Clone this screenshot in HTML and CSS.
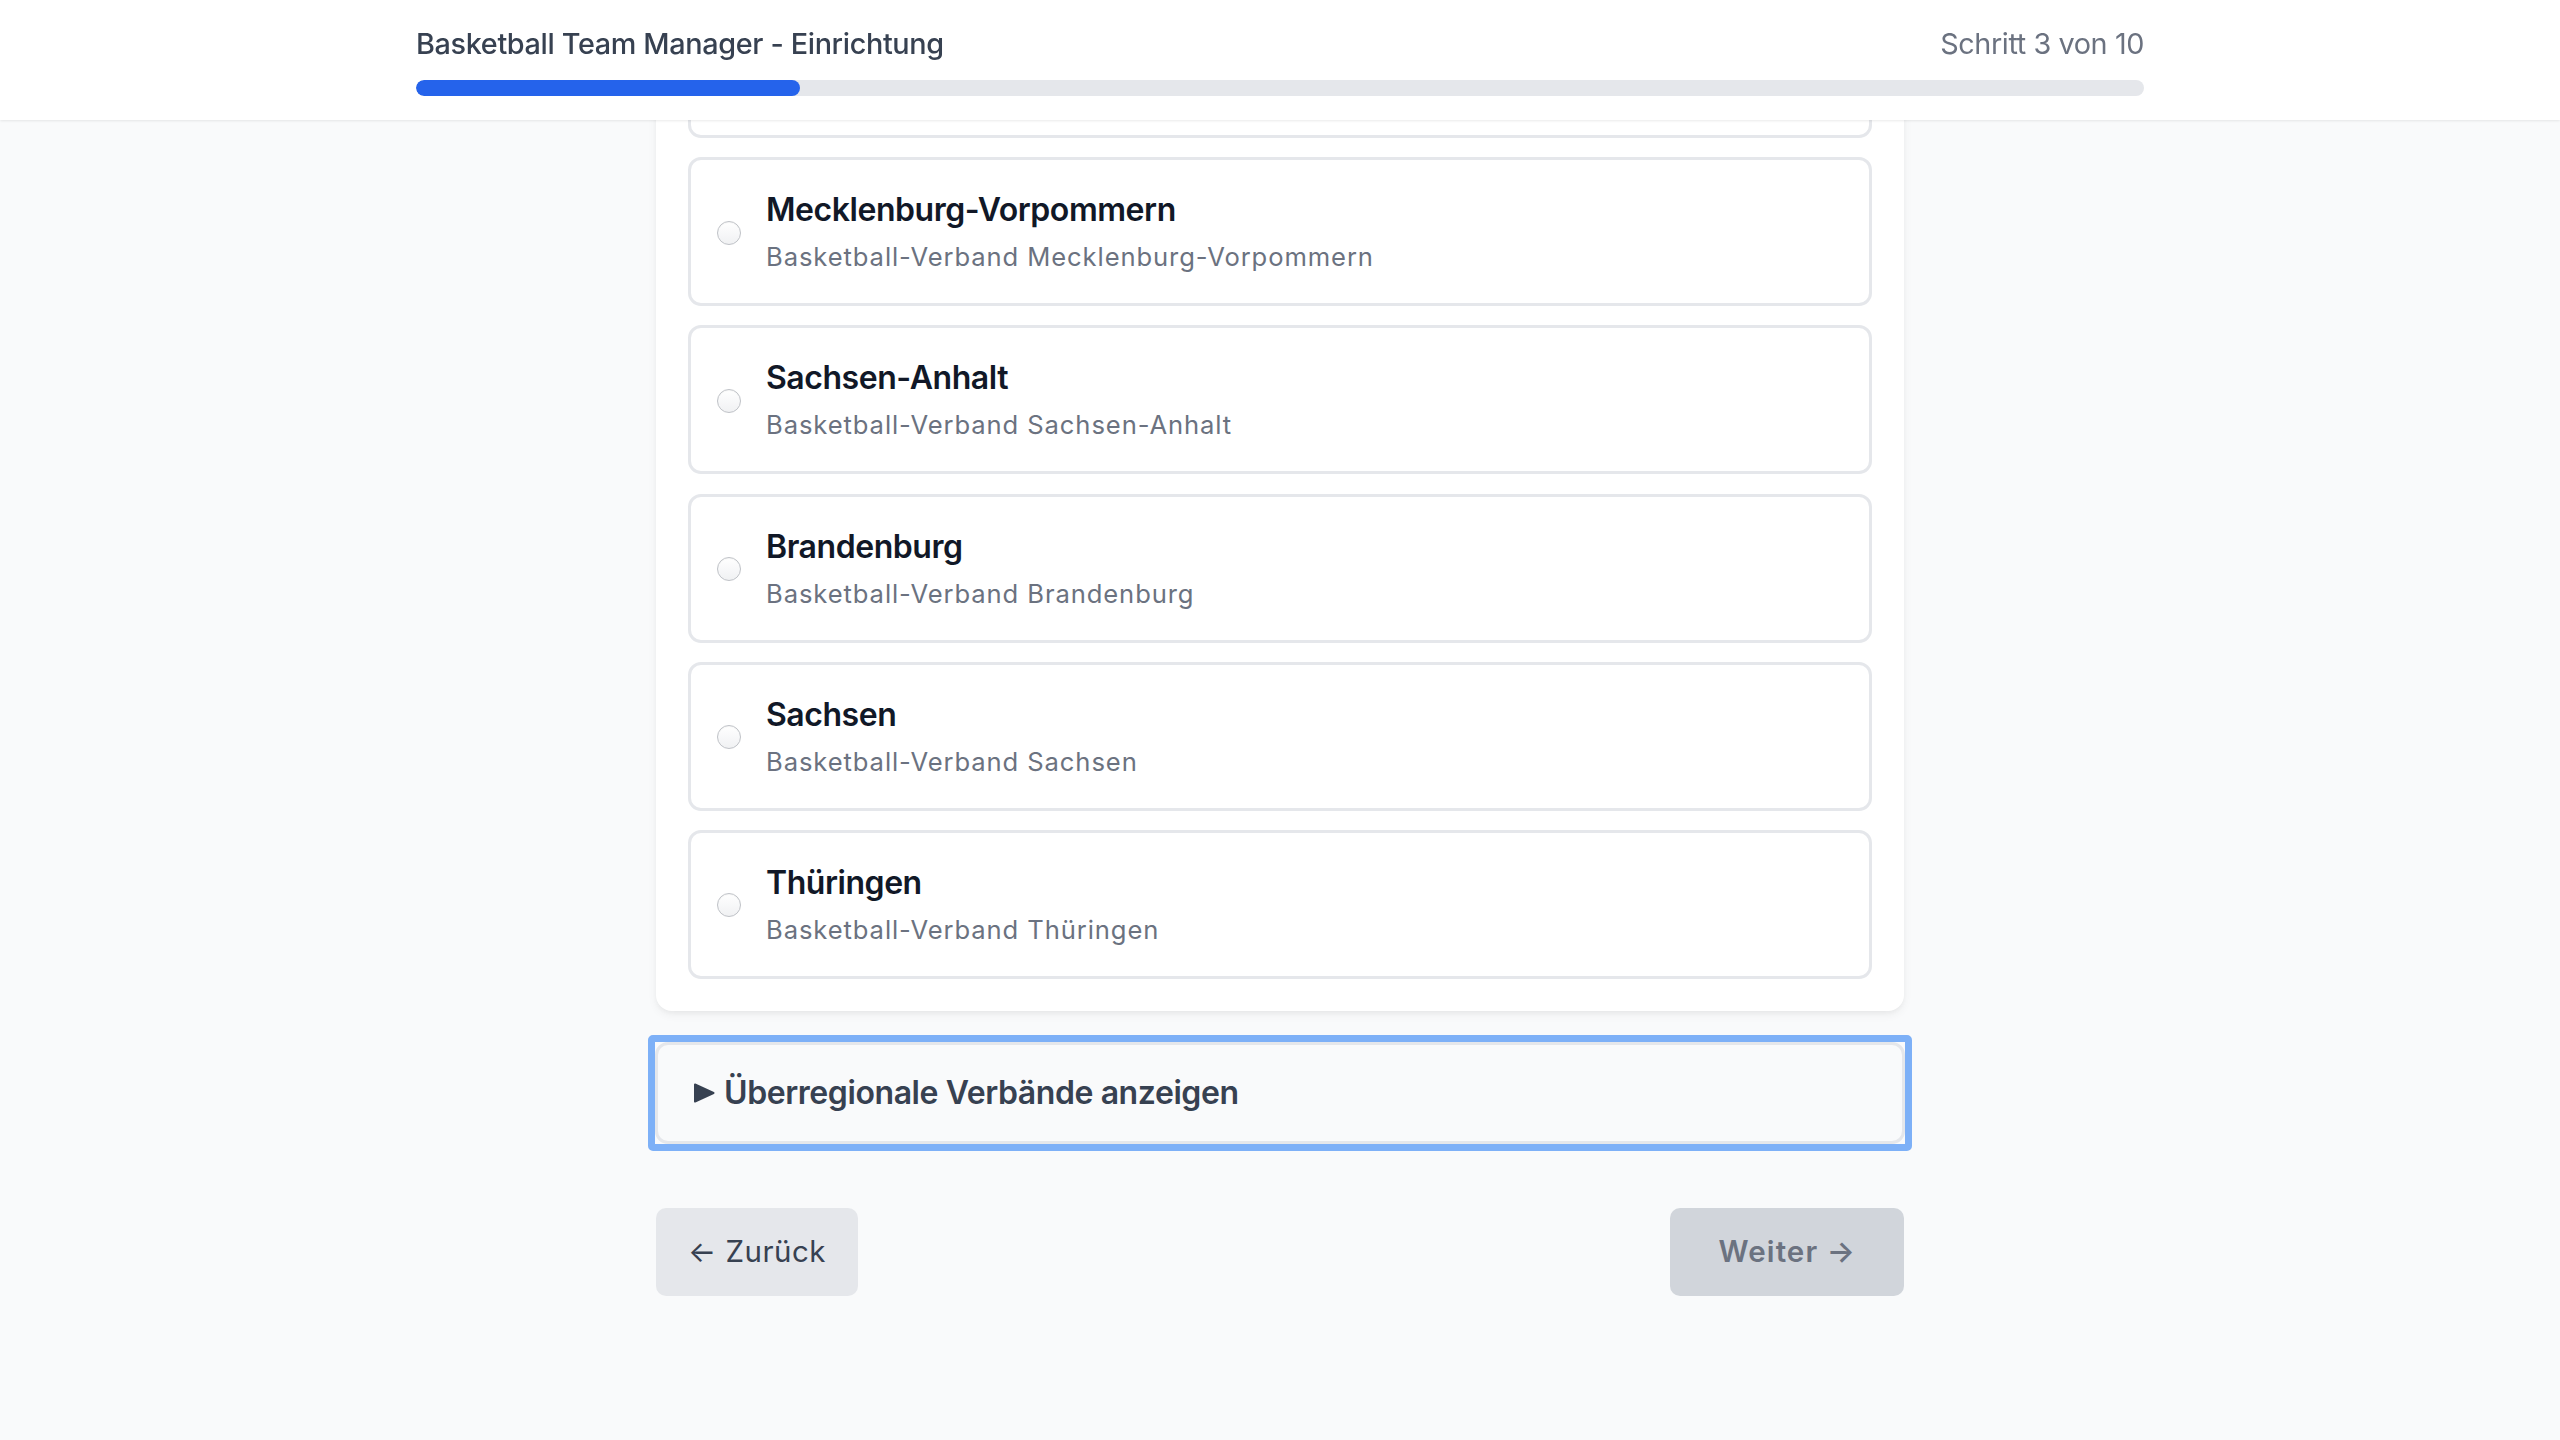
FILE: index.html
```html
<!DOCTYPE html>
<html lang="de">
<head>
<meta charset="utf-8">
<title>Basketball Team Manager - Einrichtung</title>
<link rel="stylesheet" href="styles.css">
</head>
<body>
<header class="topbar">
  <div class="topbar-inner">
    <div class="topbar-row">
      <h1 class="app-title">Basketball Team Manager - Einrichtung</h1>
      <span class="step">Schritt 3 von 10</span>
    </div>
    <div class="progress"><div class="progress-fill" style="width:22.22%"></div></div>
  </div>
</header>
<main class="page">
  <section class="panel">
    <ul class="options">
      <li class="option option-ghost"></li>
      <li class="option">
        <span class="radio"></span>
        <div class="option-text">
          <div class="option-title">Mecklenburg-Vorpommern</div>
          <div class="option-sub">Basketball-Verband Mecklenburg-Vorpommern</div>
        </div>
      </li>
      <li class="option">
        <span class="radio"></span>
        <div class="option-text">
          <div class="option-title">Sachsen-Anhalt</div>
          <div class="option-sub">Basketball-Verband Sachsen-Anhalt</div>
        </div>
      </li>
      <li class="option">
        <span class="radio"></span>
        <div class="option-text">
          <div class="option-title">Brandenburg</div>
          <div class="option-sub">Basketball-Verband Brandenburg</div>
        </div>
      </li>
      <li class="option">
        <span class="radio"></span>
        <div class="option-text">
          <div class="option-title">Sachsen</div>
          <div class="option-sub">Basketball-Verband Sachsen</div>
        </div>
      </li>
      <li class="option">
        <span class="radio"></span>
        <div class="option-text">
          <div class="option-title">Thüringen</div>
          <div class="option-sub">Basketball-Verband Thüringen</div>
        </div>
      </li>
    </ul>
  </section>
  <div class="focus-ring">
    <details class="more">
      <summary class="more-summary">
        <svg class="marker" width="22" height="20" viewBox="0 0 22 20"><polygon points="2,1.5 20.5,10 2,18.5" fill="#374151" stroke="#374151" stroke-width="2" stroke-linejoin="round"/></svg>
        <span>Überregionale Verbände anzeigen</span>
      </summary>
    </details>
  </div>
  <div class="nav">
    <button class="btn btn-back" type="button">← Zurück</button>
    <button class="btn btn-next" type="button" disabled>Weiter →</button>
  </div>
</main>
</body>
</html>
```

FILE: styles.css
```css
* { box-sizing: border-box; }
html, body { margin: 0; padding: 0; }
body {
  background: #f9fafb;
  font-family: Inter, "Noto Sans", "Liberation Sans", sans-serif;
  color: #111827;
  min-height: 1440px;
}

.topbar {
  position: fixed;
  top: 0; left: 0; right: 0;
  height: 120px;
  background: #ffffff;
  box-shadow: 0 1px 3px rgba(0,0,0,0.06), 0 1px 2px rgba(0,0,0,0.04);
  z-index: 10;
}
.topbar-inner {
  width: 1728px;
  margin: 0 auto;
  padding-top: 21px;
}
.topbar-row {
  display: flex;
  justify-content: space-between;
  align-items: baseline;
  height: 45px;
}
.app-title {
  margin: 0;
  font-size: 28.8px;
  line-height: 45px;
  font-weight: 500;
  letter-spacing: -0.35px;
  color: #374151;
}
.step {
  font-size: 28.8px;
  line-height: 45px;
  letter-spacing: -0.4px;
  color: #6b7280;
}
.progress {
  margin-top: 14px;
  height: 16px;
  border-radius: 8px;
  background: #e5e7eb;
  overflow: hidden;
}
.progress-fill {
  height: 100%;
  background: #2563eb;
  border-radius: 8px;
}

.page {
  width: 1248px;
  margin: -43px auto 0;
}
.panel {
  background: #ffffff;
  border-radius: 16px;
  padding: 32px;
  box-shadow: 0 4px 10px rgba(0,0,0,0.05), 0 2px 4px rgba(0,0,0,0.03);
}
.options {
  list-style: none;
  margin: 0;
  padding: 0;
  display: flex;
  flex-direction: column;
  gap: 19.2px;
}
.option {
  display: flex;
  align-items: center;
  height: 149px;
  border: 3.2px solid #e5e7eb;
  border-radius: 13px;
  padding: 0 26px;
  background: #ffffff;
}
.radio {
  flex: none;
  width: 24px;
  height: 24px;
  margin-top: 2px;
  border-radius: 50%;
  border: 1px solid #bfc2c7;
  background: linear-gradient(#ffffff, #f0f1f3);
  box-shadow: inset 0 1px 1px rgba(0,0,0,0.04);
  margin-right: 25px;
}
.option-text {
  display: flex;
  flex-direction: column;
  gap: 6px;
}
.option-title {
  font-size: 32px;
  line-height: 45px;
  font-weight: 600;
  letter-spacing: -0.45px;
  color: #111827;
}
.option-sub {
  font-size: 25.6px;
  line-height: 38px;
  letter-spacing: 0.9px;
  color: #6b7280;
}

.focus-ring {
  margin: 24px -8px 0;
  border: 7px solid #7db0f7;
  border-radius: 5px;
}
.more {
  border: 3.2px solid #e5e7eb;
  border-radius: 13px;
  background: #f9fafb;
}
.more-summary {
  list-style: none;
  display: flex;
  align-items: center;
  gap: 9px;
  padding: 25.5px 32px 25.5px 35px;
  font-size: 32px;
  line-height: 45px;
  font-weight: 600;
  letter-spacing: -0.42px;
  color: #374151;
  cursor: pointer;
  outline: none;
}
.more-summary::-webkit-details-marker { display: none; }
.marker { flex: none; }

.nav {
  margin-top: 57px;
  display: flex;
  justify-content: space-between;
}
.btn {
  height: 88px;
  border: none;
  border-radius: 10px;
  font-family: inherit;
  font-size: 29.5px;
  line-height: 45px;
  padding: 0 32px;
}
.btn-back {
  background: #e5e7eb;
  color: #374151;
  font-weight: 400;
  letter-spacing: 0.5px;
}
.btn-next {
  background: #d1d5db;
  color: #6b7280;
  font-weight: 600;
  letter-spacing: 1.1px;
  padding: 0 48px 0 49px;
}
```
